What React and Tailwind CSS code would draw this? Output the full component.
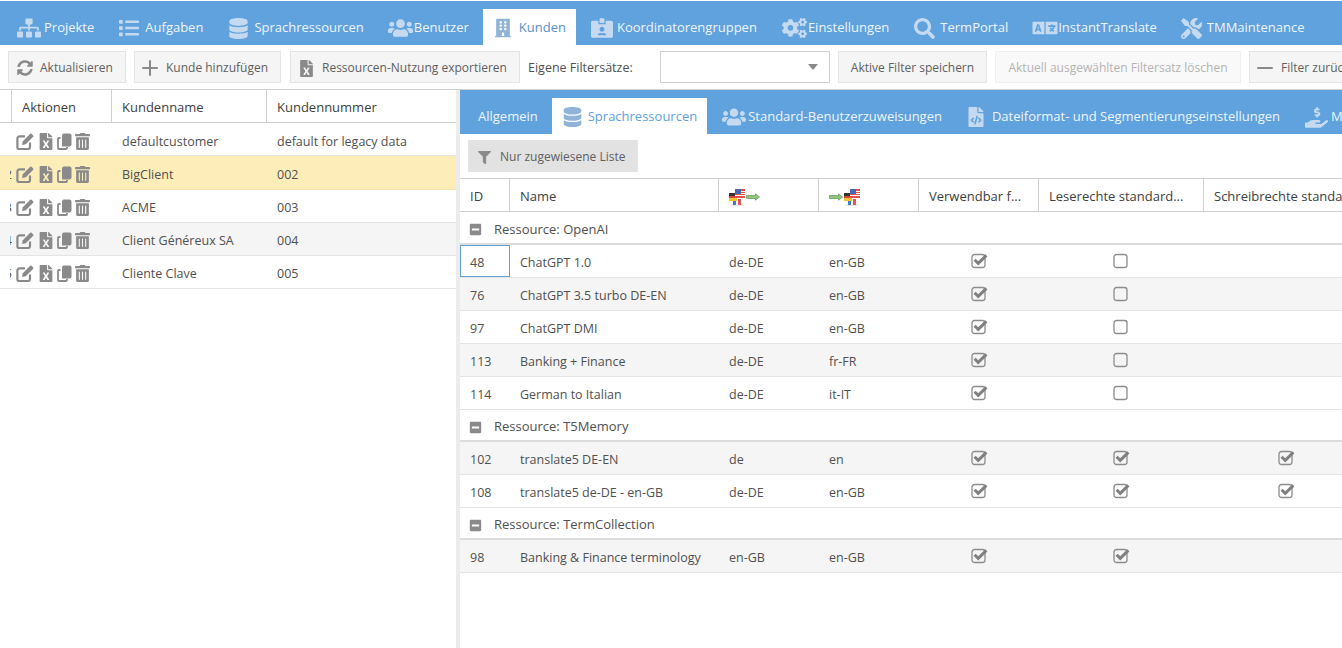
import {
  FaSitemap, FaList, FaDatabase, FaUsers, FaBuilding, FaIdCardAlt, FaCogs, FaSearch, FaLanguage, FaTools,
  FaSyncAlt, FaFileExcel, FaTrashAlt, FaFilter, FaFileCode, FaHandHoldingUsd, FaMinusSquare,
} from 'react-icons/fa';
import { Plus, Minus } from 'lucide-react';

const mainTabs = [
  { label: 'Projekte', Icon: FaSitemap, icon: 'w-[24px] h-[20px]', gap: 'gap-[3px]', margin: '' },
  { label: 'Aufgaben', Icon: FaList, icon: 'w-[20px] h-[20px]', gap: 'gap-[6px]', margin: 'ml-[-1px]' },
  { label: 'Sprachressourcen', Icon: FaDatabase, icon: 'w-[19px] h-[21px]', gap: 'gap-[6px]', margin: '' },
  { label: 'Benutzer', Icon: FaUsers, icon: 'w-[25px] h-[20px]', gap: 'gap-px', margin: 'ml-[-2px]' },
  { label: 'Kunden', Icon: FaBuilding, icon: 'w-[16px] h-[20px]', gap: 'gap-[8px]', margin: 'ml-px', active: true },
  { label: 'Koordinatorengruppen', Icon: FaIdCardAlt, icon: 'w-[22px] h-[20px]', gap: 'gap-[4px]', margin: 'ml-[2px]' },
  { label: 'Einstellungen', Icon: FaCogs, icon: 'w-[25px] h-[20px]', gap: 'gap-px', margin: 'ml-[-1px]' },
  { label: 'TermPortal', Icon: FaSearch, icon: 'w-[21px] h-[21px]', gap: 'gap-[5px]', margin: 'ml-[-1px]' },
  { label: 'InstantTranslate', Icon: FaLanguage, icon: 'w-[26px] h-[20px]', gap: 'gap-0', margin: 'ml-[-2px]' },
  { label: 'TMMaintenance', Icon: FaTools, icon: 'w-[21px] h-[21px]', gap: 'gap-[5px]', margin: 'ml-[-2px]' },
];

const customers = [
  { nr: '1', name: 'defaultcustomer', number: 'default for legacy data', row: 'h-[33px] bg-white border-[#e4e4e4]', text: 'pt-[6px]', icons: 'pt-[4px]' },
  { nr: '2', name: 'BigClient', number: '002', row: 'h-[34px] bg-[#fdeeb9] border-[#f3e2ac]', text: 'pt-[5px]', icons: 'pt-[3px]' },
  { nr: '3', name: 'ACME', number: '003', row: 'h-[33px] bg-white border-[#e4e4e4]', text: 'pt-[4px]', icons: 'pt-[2px]' },
  { nr: '4', name: 'Client Généreux SA', number: '004', row: 'h-[33px] bg-[#f5f5f5] border-[#e4e4e4]', text: 'pt-[4px]', icons: 'pt-[2px]' },
  { nr: '5', name: 'Cliente Clave', number: '005', row: 'h-[33px] bg-white border-[#e4e4e4]', text: 'pt-[4px]', icons: 'pt-[2px]' },
];

const groups = [
  {
    title: 'Ressource: OpenAI',
    height: 'h-[33px]',
    rows: [
      { id: '48', name: 'ChatGPT 1.0', src: 'de-DE', trg: 'en-GB', use: true, read: false, selected: true },
      { id: '76', name: 'ChatGPT 3.5 turbo DE-EN', src: 'de-DE', trg: 'en-GB', use: true, read: false, alt: true },
      { id: '97', name: 'ChatGPT DMI', src: 'de-DE', trg: 'en-GB', use: true, read: false },
      { id: '113', name: 'Banking + Finance', src: 'de-DE', trg: 'fr-FR', use: true, read: false, alt: true },
      { id: '114', name: 'German to Italian', src: 'de-DE', trg: 'it-IT', use: true, read: false },
    ],
  },
  {
    title: 'Ressource: T5Memory',
    height: 'h-[32px]',
    rows: [
      { id: '102', name: 'translate5 DE-EN', src: 'de', trg: 'en', use: true, read: true, write: true, alt: true },
      { id: '108', name: 'translate5 de-DE - en-GB', src: 'de-DE', trg: 'en-GB', use: true, read: true, write: true },
    ],
  },
  {
    title: 'Ressource: TermCollection',
    height: 'h-[32px]',
    rows: [
      { id: '98', name: 'Banking & Finance terminology', src: 'en-GB', trg: 'en-GB', use: true, read: true, alt: true },
    ],
  },
];

const Flags = () => (
  <svg width="16" height="17" viewBox="0 0 16 17" className="shrink-0">
    <ellipse cx="8" cy="16" rx="7" ry="1" fill="#e4e4e4" />
    <rect x="4" y="10" width="8" height="6" fill="#fff" />
    <rect x="4" y="10" width="3" height="6" fill="#3f7fc0" />
    <rect x="9" y="10" width="3" height="6" fill="#e25555" />
    <rect x="0" y="4" width="8" height="3" fill="#333" />
    <rect x="0" y="7" width="8" height="2" fill="#d8433b" />
    <rect x="0" y="9" width="8" height="3" fill="#f2c230" />
    <rect x="6" y="0" width="10" height="9" fill="#e8504a" />
    <rect x="6" y="2" width="10" height="1" fill="#fff" />
    <rect x="6" y="4" width="10" height="1" fill="#fff" />
    <rect x="6" y="6" width="10" height="1" fill="#fff" />
    <rect x="6" y="0" width="6" height="5" fill="#4a66b8" />
  </svg>
);

const Arrow = () => (
  <svg width="14" height="8" viewBox="0 0 14 8" className="shrink-0">
    <path d="M0.5 2.5h9V0.8L13.5 4l-4 3.2V5.5h-9z" fill="#8fc47f" stroke="#5c9a50" strokeWidth="0.7" />
  </svg>
);

const Check = ({ checked }) => (
  <svg width="17" height="16" viewBox="0 0 17 16" className="shrink-0">
    <rect x="1" y="1.5" width="13" height="13" rx="2.5" fill="none" stroke="#8c8c8c" strokeWidth="1.3" />
    {checked && <path d="M3.6 6.8l3.6 3.6L15.4 2.4" fill="none" stroke="#808080" strokeWidth="3" />}
  </svg>
);

const EditIcon = () => (
  <svg width="18" height="17" viewBox="0 0 18 17" className="shrink-0">
    <path d="M9 3.4H3.6a2.2 2.2 0 0 0-2.2 2.2v8.8a1.6 1.6 0 0 0 1.6 1.6h9a2 2 0 0 0 2-2V9.5" fill="none" stroke="currentColor" strokeWidth="2.2" />
    <path d="M6 12l0.8-3.8L14.2 0.8a1 1 0 0 1 1.4 0l1.6 1.6a1 1 0 0 1 0 1.4L9.8 11.2z" fill="currentColor" />
  </svg>
);

const CopyIcon = () => (
  <svg width="15" height="17" viewBox="0 0 15 17" className="shrink-0 ml-[4px]">
    <path d="M7 0.5h5.5a2 2 0 0 1 2 2v9a2 2 0 0 1-2 2H5V2.5a2 2 0 0 1 2-2z" fill="currentColor" />
    <path d="M3.5 5H2a1 1 0 0 0-1 1v9a1 1 0 0 0 1 1h7a1 1 0 0 0 1-1v-1" fill="none" stroke="currentColor" strokeWidth="1.8" />
  </svg>
);

const ToolButton = ({ className, children }) => (
  <div className={`h-[32px] pt-[2px] flex items-center shrink-0 border border-[#e4e4e4] text-[12px] ${className}`}>
    {children}
  </div>
);

const HeaderCell = ({ className, children }) => (
  <div className={`h-full pt-[4px] px-[10px] flex items-center shrink-0 border-r border-[#d0d0d0] text-[13px] text-[#404040] whitespace-nowrap overflow-hidden ${className}`}>
    {children}
  </div>
);

const App = () => {
  return (
    <div className="w-[1342px] h-[648px] overflow-hidden bg-white flex flex-col font-['Open_Sans',sans-serif] text-[#404040]">
      <div className="mt-px h-[44px] shrink-0 bg-[#5fa2dd] flex items-end pl-[4px] whitespace-nowrap">
        {mainTabs.map(({ label, Icon, icon, gap, margin, active }) => (
          <div
            key={label}
            className={`flex items-center pt-[2px] h-[36px] text-[13px] ${gap} ${margin} ${active ? 'bg-white text-[#5b8fc7] pl-[12px] pr-[10px]' : 'text-[#f0f5fb] px-[13px]'}`}
          >
            <Icon className={`${icon} ${active ? 'text-[#8fb4d8]' : 'text-[#c5daf0]'}`} />
            <span>{label}</span>
          </div>
        ))}
      </div>

      <div className="h-[45px] shrink-0 border-b border-[#d0d0d0] flex items-start pt-[6px] pl-[8px] gap-[8px] whitespace-nowrap">
        <ToolButton className="w-[118px] pl-[8px] gap-[7px] bg-[#f5f5f5] text-[#606060]">
          <FaSyncAlt className="w-[16px] h-[16px] text-[#8a8a8a]" />
          Aktualisieren
        </ToolButton>
        <ToolButton className="w-[147px] pl-[3px] gap-[4px] bg-[#f5f5f5] text-[#606060]">
          <Plus className="w-[24px] h-[24px] shrink-0 text-[#8a8a8a]" strokeWidth={2} />
          Kunde hinzufügen
        </ToolButton>
        <ToolButton className="w-[230px] ml-px pl-[9px] gap-[9px] bg-[#f5f5f5] text-[#606060]">
          <FaFileExcel className="w-[13px] h-[17px] text-[#8a8a8a]" />
          Ressourcen-Nutzung exportieren
        </ToolButton>
        <div className="w-[124px] h-[32px] pt-[2px] shrink-0 flex items-center text-[12.5px] text-[#505050]">Eigene Filtersätze:</div>
        <div className="w-[170px] h-[32px] shrink-0 border border-[#d0d0d0] flex items-center justify-end pr-[11px]">
          <div className="w-0 h-0 border-x-[5px] border-x-transparent border-t-[6px] border-t-[#8a8a8a]" />
        </div>
        <ToolButton className="w-[149px] justify-center bg-[#f5f5f5] text-[#606060]">Aktive Filter speichern</ToolButton>
        <ToolButton className="w-[246px] justify-center bg-[#f9f9f9] border-[#efefef] text-[#b4b4b4]">Aktuell ausgewählten Filtersatz löschen</ToolButton>
        <ToolButton className="w-[150px] pl-[3px] gap-[4px] bg-[#f5f5f5] text-[#606060]">
          <Minus className="w-[24px] h-[24px] shrink-0 text-[#8a8a8a]" strokeWidth={2} />
          Filter zurücksetzen
        </ToolButton>
      </div>

      <div className="flex-1 flex min-h-0">
        <div className="w-[456px] shrink-0">
          <div className="h-[33px] flex border-b border-[#d0d0d0]">
            <div className="w-[12px] h-full shrink-0 border-r border-[#d0d0d0]" />
            <HeaderCell className="w-[100px]">Aktionen</HeaderCell>
            <HeaderCell className="w-[155px]">Kundenname</HeaderCell>
            <div className="flex-1 h-full pt-[4px] flex items-center px-[10px] text-[13px]">Kundennummer</div>
          </div>
          {customers.map((c) => (
            <div key={c.name} className={`flex items-center border-b text-[12.5px] text-[#505050] ${c.row}`}>
              <div className={`w-[16px] pl-[10px] shrink-0 ${c.text}`}>
                <div className="w-[2px] overflow-hidden flex justify-end text-[13px]">{c.nr}</div>
              </div>
              <div className={`w-[96px] shrink-0 flex items-center text-[#8a8a8a] ${c.icons}`}>
                <EditIcon />
                <FaFileExcel className="w-[14px] h-[17px] ml-[5px]" />
                <CopyIcon />
                <FaTrashAlt className="w-[15px] h-[17px] ml-[3px]" />
              </div>
              <div className={`w-[155px] shrink-0 px-[10px] whitespace-nowrap ${c.text}`}>{c.name}</div>
              <div className={`flex-1 px-[10px] whitespace-nowrap ${c.text}`}>{c.number}</div>
            </div>
          ))}
        </div>

        <div className="w-[4px] shrink-0 bg-[#ececec]" />

        <div className="flex-1 min-w-0 overflow-hidden">
          <div className="h-[44px] bg-[#5fa2dd] flex items-end pl-[5px] whitespace-nowrap text-[13px] text-[#f0f5fb]">
            <div className="h-[36px] pt-[2px] flex items-center pl-[13px] pr-[14px]">Allgemein</div>
            <div className="h-[36px] pt-[2px] flex items-center pl-[11px] pr-[10px] gap-[6px] bg-white text-[#5fa2dd]">
              <FaDatabase className="w-[19px] h-[20px] text-[#8fb4d8]" />
              Sprachressourcen
            </div>
            <div className="h-[36px] pt-[2px] flex items-center pl-[15px] gap-[2px]">
              <FaUsers className="w-[24px] h-[20px] text-[#c5daf0]" />
              Standard-Benutzerzuweisungen
            </div>
            <div className="h-[36px] pt-[2px] flex items-center pl-[26px] gap-[8px]">
              <FaFileCode className="w-[16px] h-[20px] text-[#c5daf0]" />
              Dateiformat- und Segmentierungseinstellungen
            </div>
            <div className="h-[36px] pt-[2px] flex items-center pl-[25px] gap-[3px]">
              <FaHandHoldingUsd className="w-[23px] h-[21px] text-[#c5daf0]" />
              MT-Kosten
            </div>
          </div>

          <div className="h-[44px] pt-[6px] pl-[8px]">
            <ToolButton className="w-[170px] bg-[#e2e2e2] border-[#d4d4d4] pl-[9px] gap-[9px] text-[#606060]">
              <FaFilter className="w-[13px] h-[13px] text-[#8a8a8a]" />
              Nur zugewiesene Liste
            </ToolButton>
          </div>

          <div className="h-[34px] flex border-y border-[#d0d0d0]">
            <HeaderCell className="w-[50px]">ID</HeaderCell>
            <HeaderCell className="w-[209px]">Name</HeaderCell>
            <HeaderCell className="w-[100px] gap-[1px]"><Flags /><Arrow /></HeaderCell>
            <HeaderCell className="w-[100px] gap-[1px]"><Arrow /><Flags /></HeaderCell>
            <HeaderCell className="w-[120px]">Verwendbar f...</HeaderCell>
            <HeaderCell className="w-[165px]">Leserechte standard...</HeaderCell>
            <HeaderCell className="w-[165px]">Schreibrechte standard...</HeaderCell>
          </div>

          {groups.map((g) => (
            <div key={g.title}>
              <div className={`${g.height} pt-[4px] flex items-center pl-[9px] gap-[12px] border-b-2 border-[#dcdcdc] text-[13px] text-[#505050]`}>
                <FaMinusSquare className="w-[13px] h-[13px] text-[#8a8a8a]" />
                {g.title}
              </div>
              {g.rows.map((r) => (
                <div key={r.id} className={`h-[33px] flex items-center border-b border-[#e4e4e4] text-[12.5px] text-[#505050] whitespace-nowrap ${r.alt ? 'bg-[#f5f5f5]' : 'bg-white'}`}>
                  <div className={`w-[50px] h-full pt-[4px] shrink-0 flex items-center ${r.selected ? 'border border-[#5fa2dd] pl-[9px]' : 'pl-[10px]'}`}>{r.id}</div>
                  <div className="w-[209px] pt-[4px] shrink-0 px-[10px]">{r.name}</div>
                  <div className="w-[100px] pt-[4px] shrink-0 px-[10px]">{r.src}</div>
                  <div className="w-[100px] pt-[4px] shrink-0 px-[10px]">{r.trg}</div>
                  <div className="w-[120px] shrink-0 flex justify-center"><Check checked={r.use} /></div>
                  <div className="w-[165px] shrink-0 flex justify-center"><Check checked={r.read} /></div>
                  <div className="w-[165px] shrink-0 flex justify-center">{r.write && <Check checked />}</div>
                </div>
              ))}
            </div>
          ))}
        </div>
      </div>
    </div>
  );
};

export default App;
